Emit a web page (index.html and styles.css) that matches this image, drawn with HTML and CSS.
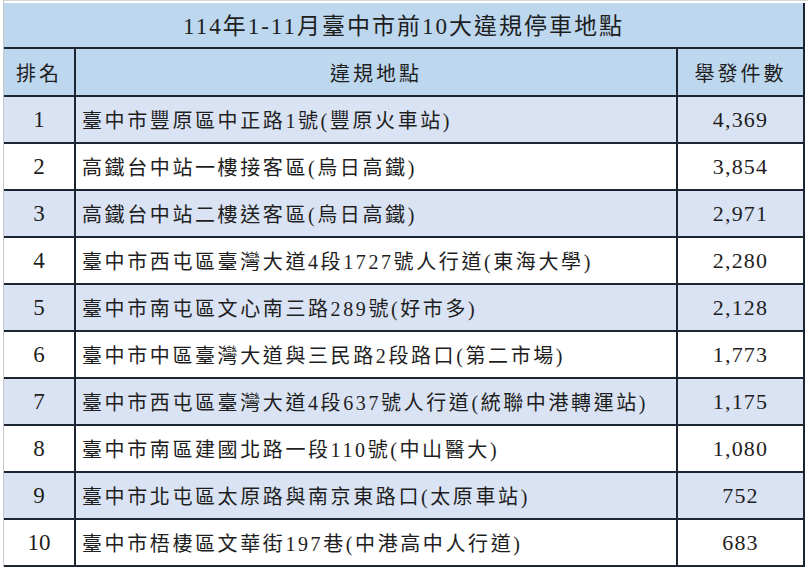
FILE: index.html
```html
<!DOCTYPE html>
<html lang="zh-Hant">
<head>
<meta charset="utf-8">
<title>114年1-11月臺中市前10大違規停車地點</title>
<link rel="stylesheet" href="styles.css">
</head>
<body>
<div class="sheet">
  <table class="rank-table">
    <colgroup>
      <col class="c-rank">
      <col class="c-place">
      <col class="c-count">
    </colgroup>
    <tr class="title-row"><td colspan="3" class="title">114年1-11月臺中市前10大違規停車地點</td></tr>
    <tr class="head-row">
      <td class="rank">排名</td>
      <td class="place-head">違規地點</td>
      <td class="count-head">舉發件數</td>
    </tr>
    <tr class="odd"><td class="rank">1</td><td class="place">臺中市豐原區中正路1號(豐原火車站)</td><td class="count">4,369</td></tr>
    <tr><td class="rank">2</td><td class="place">高鐵台中站一樓接客區(烏日高鐵)</td><td class="count">3,854</td></tr>
    <tr class="odd"><td class="rank">3</td><td class="place">高鐵台中站二樓送客區(烏日高鐵)</td><td class="count">2,971</td></tr>
    <tr><td class="rank">4</td><td class="place">臺中市西屯區臺灣大道4段1727號人行道(東海大學)</td><td class="count">2,280</td></tr>
    <tr class="odd"><td class="rank">5</td><td class="place">臺中市南屯區文心南三路289號(好市多)</td><td class="count">2,128</td></tr>
    <tr><td class="rank">6</td><td class="place">臺中市中區臺灣大道與三民路2段路口(第二市場)</td><td class="count">1,773</td></tr>
    <tr class="odd"><td class="rank">7</td><td class="place">臺中市西屯區臺灣大道4段637號人行道(統聯中港轉運站)</td><td class="count">1,175</td></tr>
    <tr><td class="rank">8</td><td class="place">臺中市南區建國北路一段110號(中山醫大)</td><td class="count">1,080</td></tr>
    <tr class="odd"><td class="rank">9</td><td class="place">臺中市北屯區太原路與南京東路口(太原車站)</td><td class="count">752</td></tr>
    <tr><td class="rank">10</td><td class="place">臺中市梧棲區文華街197巷(中港高中人行道)</td><td class="count">683</td></tr>
  </table>
</div>
</body>
</html>
```
FILE: styles.css
```css
html, body {
  margin: 0;
  padding: 0;
  background: #ffffff;
}
body {
  font-family: "Liberation Serif", "Noto Sans CJK TC", serif;
  color: #1e1e1e;
}
.sheet {
  margin-left: 3px;
  padding-top: 2px;
  border-left: 1px solid #c9c9c9;
  border-top: 1px solid #d6d6d6;
  min-height: 566px;
  box-sizing: border-box;
}
.rank-table {
  border-collapse: collapse;
  width: 800px;
  table-layout: fixed;
}
.c-rank { width: 71px; }
.c-place { width: 602px; }
.c-count { width: 127px; }
.rank-table td {
  border: 2px solid #1c2632;
  padding: 0;
  height: 45px;
  vertical-align: middle;
}
.rank-table tr td:first-child {
  border-left: none;
}
.title-row td {
  border-top: none;
}
.title {
  background: #bdd7ee;
  text-align: center;
  font-size: 23px;
  letter-spacing: 2px;
  height: 41px !important;
  padding-bottom: 3px !important;
}
.head-row td {
  background: #bdd7ee;
  height: 46px !important;
  font-size: 20px;
  letter-spacing: 3px;
  text-align: center;
}
.odd td {
  background: #dae3f3;
}
.rank {
  text-align: center;
  font-size: 23px;
}
.head-row .rank {
  font-size: 20px;
}
.place {
  font-size: 20px;
  letter-spacing: 2.6px;
  padding-left: 6px !important;
  white-space: nowrap;
}
.count {
  text-align: center;
  font-size: 22px;
  letter-spacing: 1.2px;
}
```
